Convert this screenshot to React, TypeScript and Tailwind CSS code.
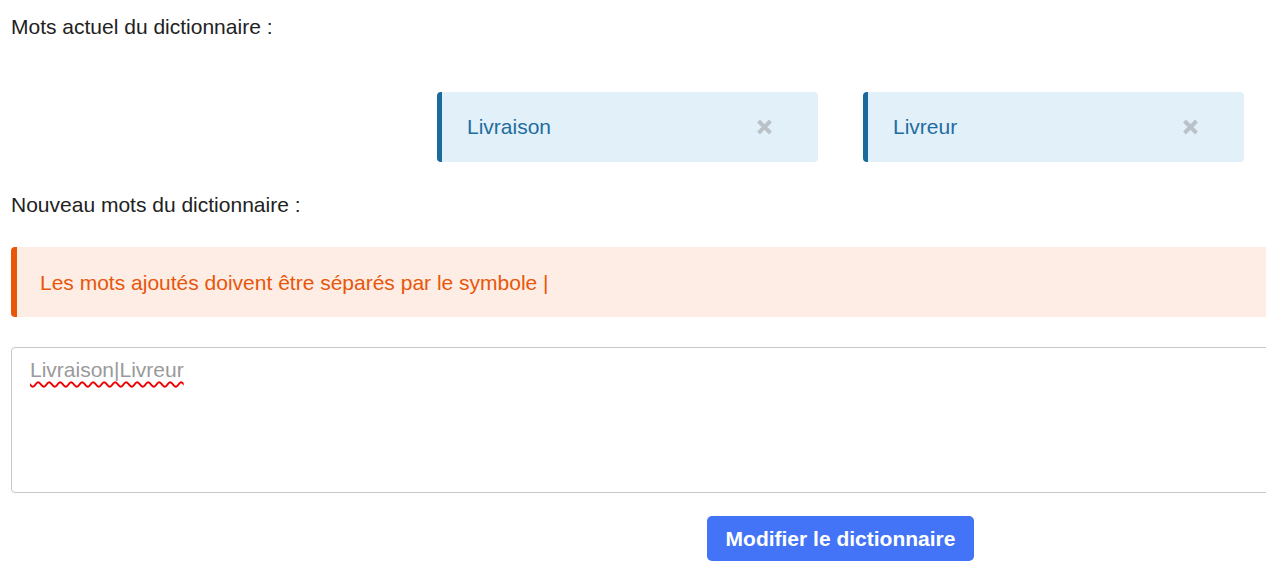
const words = ["Livraison", "Livreur"];

function WordCard({ word }: { word: string }) {
  return (
    <div className="flex h-[70px] items-center justify-between rounded-[4px] border-l-[5px] border-[#1a6a9c] bg-[#e2f0fa] pl-[25px] pr-[45px]">
      <span className="text-[21px] leading-[24px] text-[#1f6d9e]">{word}</span>
      <svg width="17" height="16" viewBox="0 0 17 16" className="text-[#bac2c8]">
        <path d="M2.5 2 L14.5 14 M14.5 2 L2.5 14" stroke="currentColor" strokeWidth="4" strokeLinecap="butt" />
      </svg>
    </div>
  );
}

export default function App() {
  return (
    <div className="w-screen h-screen overflow-hidden bg-white" style={{ fontFamily: "'Liberation Sans', Arial, sans-serif" }}>
      <div className="w-[1320px] pl-[11px] pt-[15px] text-[#222]">
        <p className="text-[21px] leading-[24px]">Mots actuel du dictionnaire :</p>

        {/* current words */}
        <div className="mt-[53px] grid grid-cols-[381px_381px_381px] gap-x-[45px]">
          <div />
          {words.map((w) => (
            <WordCard key={w} word={w} />
          ))}
        </div>

        <p className="mt-[31px] text-[21px] leading-[24px]">Nouveau mots du dictionnaire :</p>

        {/* info alert */}
        <div className="mt-[30px] flex h-[70px] items-center rounded-l-[4px] border-l-[6px] border-[#e8560a] bg-[#feede5] pl-[23px] pt-[2px]">
          <span className="text-[21px] leading-[24px] text-[#e8560a]">Les mots ajoutés doivent être séparés par le symbole |</span>
        </div>

        {/* textarea */}
        <div className="mt-[30px] h-[146px] rounded-[4px] border border-[#c8c8c8] px-[18px] pt-[10px]">
          <span className="text-[21px] leading-[24px] text-[#9a9a9a] underline decoration-wavy decoration-[#e00] decoration-[1.5px] underline-offset-[4px]">
            Livraison|Livreur
          </span>
        </div>

        <div className="mt-[23px] pl-[696px]">
          <button className="h-[45px] w-[267px] rounded-[5px] bg-[#4374f8] text-[21px] font-bold text-white">
            Modifier le dictionnaire
          </button>
        </div>
      </div>
    </div>
  );
}
